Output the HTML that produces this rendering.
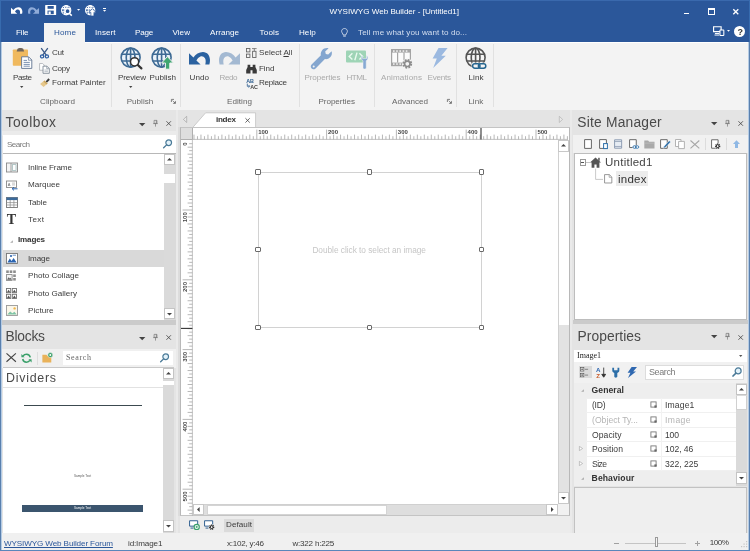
<!DOCTYPE html>
<html><head><meta charset="utf-8"><title>WYSIWYG Web Builder - [Untitled1]</title>
<style>
html,body{margin:0;padding:0;}
body{width:750px;height:551px;overflow:hidden;position:relative;background:#e4e4e4;font-family:"Liberation Sans",sans-serif;font-size:8.1px;color:#3c3c3c;}
#w div,#w svg,#w span{position:absolute;display:block;box-sizing:border-box;}
#w svg{overflow:visible;}
#w{position:absolute;left:0;top:0;width:750px;height:551px;overflow:hidden;will-change:transform;}
.t{white-space:nowrap;line-height:1;}
</style></head><body><div id="w">
<div style="left:0px;top:0px;width:750px;height:41.6px;background:#2b579a;"></div>
<div style="left:0px;top:0px;width:750px;height:1px;background:#3a69ad;"></div>
<div style="left:0px;top:0px;width:1px;height:41.6px;background:#376bae;"></div>
<div style="left:749px;top:0px;width:1px;height:41.6px;background:#376bae;"></div>
<div style="left:0px;top:41.6px;width:750px;height:68.6px;background:#f3f3f3;border-top:1px solid #fff;"></div>
<div style="left:44px;top:23px;width:41px;height:19.6px;background:#f3f3f3;"></div>
<svg style="left:10.8px;top:7.1px;color:#fff;" width="11.4" height="7" viewBox="0 0 21 12.4"><path d="M0 1.2L4.4 5.4C6.5 2.2 10 0 14 0C18.2 0 21 3.6 21 8C21 9.5 20.8 11 20.4 12.4H16.3C16.9 10 16.9 7.8 16 6.2C15 4.4 13 3.8 11.4 4.4C9.8 5 8.4 6.6 7.4 8.4L11.6 12.4H0Z" fill="currentColor"/></svg>
<svg style="left:28.2px;top:7.1px;color:#8fabd8;" width="11" height="7" viewBox="0 0 21 12.4"><g transform="translate(21,0) scale(-1,1)"><path d="M0 1.2L4.4 5.4C6.5 2.2 10 0 14 0C18.2 0 21 3.6 21 8C21 9.5 20.8 11 20.4 12.4H16.3C16.9 10 16.9 7.8 16 6.2C15 4.4 13 3.8 11.4 4.4C9.8 5 8.4 6.6 7.4 8.4L11.6 12.4H0Z" fill="currentColor"/></g></svg>
<svg style="left:45px;top:5.1px;" width="11.3" height="10" viewBox="0 0 11 10"><rect x="0" y="0" width="11" height="10" rx="0.6" fill="#fff"/><rect x="2.4" y="1" width="6.2" height="2.8" fill="#2b579a"/><rect x="2.4" y="5.6" width="6.2" height="3.6" fill="#2b579a"/><rect x="3.4" y="6.5" width="2.2" height="2.7" fill="#fff"/></svg>
<svg style="left:61.2px;top:4.5px;" width="11.4" height="11" viewBox="0 0 11.4 11"><g fill="none" stroke="#fff" stroke-width="1.15"><circle cx="5.2" cy="5.2" r="4.6"/><ellipse cx="5.2" cy="5.2" rx="2" ry="4.6"/><path d="M0.6 3.6H9.8M0.6 6.8H9.8M5.2 0.6V9.8"/></g><circle cx="6.6" cy="6.2" r="2.4" fill="#2b579a" stroke="#fff" stroke-width="1.1"/><path d="M8.2 8.2L10.8 10.6" stroke="#fff" stroke-width="1.5"/></svg>
<svg style="left:76.7px;top:9.0px;" width="3.2" height="1.8" viewBox="0 0 3.2 1.8"><path d="M0 0H3.2L1.6 1.8Z" fill="#fff"/></svg>
<svg style="left:85.4px;top:4.5px;" width="11.4" height="11" viewBox="0 0 11.4 11"><g fill="none" stroke="#fff" stroke-width="1.15"><circle cx="5.2" cy="5.2" r="4.6"/><ellipse cx="5.2" cy="5.2" rx="2" ry="4.6"/><path d="M0.6 3.6H9.8M0.6 6.8H9.8M5.2 0.6V9.8"/></g><path d="M7.4 3.6L11 7.4H8.9V11H5.9V7.4H3.8Z" fill="#fff" stroke="#2b579a" stroke-width="0.7"/></svg>
<div style="left:103.2px;top:8.4px;width:3.2px;height:0.8px;background:#fff;"></div>
<svg style="left:103.2px;top:9.85px;" width="3.2" height="1.7" viewBox="0 0 3.2 1.7"><path d="M0 0H3.2L1.6 1.7Z" fill="#fff"/></svg>
<span class="t" style="left:329.6px;top:7.64px;color:#fff;letter-spacing:-0.014px;">WYSIWYG Web Builder - [Untitled1]</span>
<div style="left:684px;top:12.6px;width:5px;height:1.4px;background:#fff;"></div>
<div style="left:708px;top:8px;width:7.2px;height:7.2px;background:transparent;border:1px solid #fff;border-top-width:2px;"></div>
<svg style="left:733px;top:9px;" width="5.6" height="5.6" viewBox="0 0 5.6 5.6"><path d="M0.3 0.3L5.3 5.3M5.3 0.3L0.3 5.3" stroke="#fff" stroke-width="1.3"/></svg>
<svg style="left:713px;top:26px;" width="11.6" height="10" viewBox="0 0 12 10"><path d="M0.6 0.6H8.4V5.6H0.6Z" fill="none" stroke="#fff" stroke-width="1.2"/><path d="M2 7.6H6.4M1.6 9.2H6.4" stroke="#fff" stroke-width="1"/><rect x="7.2" y="4" width="4" height="5.6" rx="0.5" fill="#2b579a" stroke="#fff" stroke-width="1.1"/></svg>
<svg style="left:726.8px;top:29.75px;" width="3" height="1.7" viewBox="0 0 3 1.7"><path d="M0 0H3L1.5 1.7Z" fill="#fff"/></svg>
<div style="left:734px;top:26px;width:11.2px;height:11.2px;background:#fff;border-radius:50%;"></div>
<span class="t" style="left:737.4px;top:27.64px;font-size:9px;color:#333;font-weight:700;letter-spacing:-0.800px;">?</span>
<span class="t" style="left:16px;top:28.84px;color:#fff;letter-spacing:-0.149px;">File</span>
<span class="t" style="left:54px;top:28.84px;color:#2b579a;letter-spacing:0.135px;">Home</span>
<span class="t" style="left:95px;top:28.84px;color:#fff;letter-spacing:0.070px;">Insert</span>
<span class="t" style="left:135px;top:28.84px;color:#fff;letter-spacing:-0.202px;">Page</span>
<span class="t" style="left:172.5px;top:28.84px;color:#fff;letter-spacing:0.031px;">View</span>
<span class="t" style="left:210px;top:28.84px;color:#fff;letter-spacing:0.034px;">Arrange</span>
<span class="t" style="left:259.6px;top:28.84px;color:#fff;letter-spacing:0.123px;">Tools</span>
<span class="t" style="left:299px;top:28.84px;color:#fff;letter-spacing:0.015px;">Help</span>
<svg style="left:341px;top:27.6px;" width="7" height="9" viewBox="0 0 7 9"><path d="M3.5 0.5C1.8 0.5 0.6 1.8 0.6 3.3C0.6 4.5 1.5 5.2 2 6.2V7H5V6.2C5.5 5.2 6.4 4.5 6.4 3.3C6.4 1.8 5.2 0.5 3.5 0.5ZM2.2 8.2H4.8" fill="none" stroke="#dfe7f3" stroke-width="0.8"/></svg>
<span class="t" style="left:358px;top:28.84px;color:#d5dff0;letter-spacing:0.082px;">Tell me what you want to do...</span>
<div style="left:111.0px;top:44px;width:0.9px;height:63px;background:#e1e1e1;"></div>
<div style="left:180.0px;top:44px;width:0.9px;height:63px;background:#e1e1e1;"></div>
<div style="left:299.20000000000005px;top:44px;width:0.9px;height:63px;background:#e1e1e1;"></div>
<div style="left:374.0px;top:44px;width:0.9px;height:63px;background:#e1e1e1;"></div>
<div style="left:456.0px;top:44px;width:0.9px;height:63px;background:#e1e1e1;"></div>
<div style="left:493.20000000000005px;top:44px;width:0.9px;height:63px;background:#e1e1e1;"></div>
<svg style="left:12px;top:48px;" width="20" height="21" viewBox="0 0 20 21"><rect x="0.8" y="1.4" width="15.2" height="16.4" rx="0.8" fill="#f0b95e"/><path d="M4.6 3.4L5.6 0.8C6.4-0.2 10.4-0.2 11.2 0.8L12.2 3.4Z" fill="#70655a"/><path d="M9.6 8.8H16.6L19.8 12V20.4H9.6Z" fill="#fff" stroke="#5f7390" stroke-width="0.9"/><path d="M16.4 9V12.2H19.6" fill="none" stroke="#5f7390" stroke-width="0.7"/><path d="M11.6 12.4H15M11.6 14.4H17.8M11.6 16.4H17.8M11.6 18.2H17.8" stroke="#6d86a8" stroke-width="0.9"/></svg>
<span class="t" style="left:13px;top:74.24px;letter-spacing:-0.426px;">Paste</span>
<svg style="left:20.3px;top:86.05px;" width="3.4" height="1.9" viewBox="0 0 3.4 1.9"><path d="M0 0H3.4L1.7 1.9Z" fill="#444"/></svg>
<svg style="left:40.1px;top:47.5px;" width="9" height="10.6" viewBox="0 0 9 10.6"><path d="M1.2 0.2L6.4 7.4M7.8 0.2L2.6 7.4" stroke="#3c5a88" stroke-width="1.3" fill="none"/><ellipse cx="2.1" cy="8.4" rx="1.6" ry="1.5" fill="none" stroke="#2e5fa3" stroke-width="1.3"/><ellipse cx="6.9" cy="8.4" rx="1.6" ry="1.5" fill="none" stroke="#2e5fa3" stroke-width="1.3"/></svg>
<span class="t" style="left:52px;top:49.44px;letter-spacing:-0.305px;">Cut</span>
<svg style="left:39.4px;top:62.6px;" width="11" height="10.8" viewBox="0 0 11 11"><path d="M0.5 0.5H3.6L5.4 2.3V7.4H0.5Z" fill="#fff" stroke="#a9adb4" stroke-width="0.8"/><path d="M4 3.2H8L10.4 5.6V10.5H4Z" fill="#fff" stroke="#7d8894" stroke-width="0.9"/><path d="M7.8 3.4V5.8H10.2" fill="none" stroke="#7d8894" stroke-width="0.7"/><path d="M5.4 7.2H9M5.4 8.8H9" stroke="#9aa4b0" stroke-width="0.7"/></svg>
<span class="t" style="left:52px;top:64.84px;letter-spacing:-0.302px;">Copy</span>
<svg style="left:40.2px;top:78.4px;" width="10" height="9.2" viewBox="0 0 10 9.2"><path d="M5.6 3.4L8.4 0.3L9.9 1.7L6.9 4.7Z" fill="#3d3d3d"/><path d="M4.4 2.6L7.6 5.6L3.6 9L0.1 6Z" fill="#e6c88c"/><path d="M4.4 2.6L7.6 5.6L6.6 6.4L3.5 3.4Z" fill="#c9a560"/></svg>
<span class="t" style="left:52px;top:79.44px;letter-spacing:0.005px;">Format Painter</span>
<span class="t" style="left:40px;top:98.34px;color:#666;letter-spacing:0.043px;">Clipboard</span>
<svg style="left:120px;top:47px;" width="22" height="22" viewBox="0 0 22 22"><g fill="none" stroke="#3d6a94" stroke-width="1.6"><circle cx="10.6" cy="10.6" r="9.5" fill="#eaf2f9"/><ellipse cx="10.6" cy="10.6" rx="4.37" ry="9.5"/><path d="M10.6 1.0999999999999996V20.1M1.76 7.18H19.44M1.76 14.02H19.44"/></g><circle cx="14.6" cy="14.8" r="4.1" fill="#fff" stroke="#333" stroke-width="1.5"/><path d="M17.8 18L21.4 21.4" stroke="#333" stroke-width="2.2" stroke-linecap="round"/></svg>
<span class="t" style="left:118px;top:74.24px;letter-spacing:-0.133px;">Preview</span>
<svg style="left:129.3px;top:86.05px;" width="3.4" height="1.9" viewBox="0 0 3.4 1.9"><path d="M0 0H3.4L1.7 1.9Z" fill="#444"/></svg>
<svg style="left:151px;top:47px;" width="22" height="22" viewBox="0 0 22 22"><g fill="none" stroke="#3d6a94" stroke-width="1.6"><circle cx="10.6" cy="10.6" r="9.5" fill="#eaf2f9"/><ellipse cx="10.6" cy="10.6" rx="4.37" ry="9.5"/><path d="M10.6 1.0999999999999996V20.1M1.76 7.18H19.44M1.76 14.02H19.44"/></g><path d="M16.4 9.6L22.4 16H18.8V22.2H14.4V16H10.6Z" fill="#3fa671" stroke="#f3f3f3" stroke-width="1"/></svg>
<span class="t" style="left:149.6px;top:74.24px;letter-spacing:-0.024px;">Publish</span>
<span class="t" style="left:126.7px;top:98.34px;color:#666;letter-spacing:0.009px;">Publish</span>
<svg style="left:171px;top:98.6px;" width="5" height="5" viewBox="0 0 5 5"><path d="M0.4 3V0.4H3" fill="none" stroke="#666" stroke-width="0.8"/><path d="M4.8 1.8V4.8H1.8Z" fill="#666"/><path d="M1.6 1.6L3.6 3.6" stroke="#666" stroke-width="0.7"/></svg>
<svg style="left:189px;top:51.8px;color:#2b62a0;" width="21" height="12.4" viewBox="0 0 21 12.4"><path d="M0 1.2L4.4 5.4C6.5 2.2 10 0 14 0C18.2 0 21 3.6 21 8C21 9.5 20.8 11 20.4 12.4H16.3C16.9 10 16.9 7.8 16 6.2C15 4.4 13 3.8 11.4 4.4C9.8 5 8.4 6.6 7.4 8.4L11.6 12.4H0Z" fill="currentColor"/></svg>
<span class="t" style="left:189.6px;top:74.24px;letter-spacing:0.014px;">Undo</span>
<svg style="left:218.6px;top:51.8px;color:#a3b9d2;" width="21" height="12.4" viewBox="0 0 21 12.4"><g transform="translate(21,0) scale(-1,1)"><path d="M0 1.2L4.4 5.4C6.5 2.2 10 0 14 0C18.2 0 21 3.6 21 8C21 9.5 20.8 11 20.4 12.4H16.3C16.9 10 16.9 7.8 16 6.2C15 4.4 13 3.8 11.4 4.4C9.8 5 8.4 6.6 7.4 8.4L11.6 12.4H0Z" fill="currentColor"/></g></svg>
<span class="t" style="left:219.6px;top:74.24px;color:#aaa;letter-spacing:-0.453px;">Redo</span>
<svg style="left:246px;top:48px;" width="11" height="10" viewBox="0 0 11 10"><g fill="none" stroke="#666" stroke-width="0.9"><rect x="0.5" y="0.5" width="3.4" height="3.4"/><rect x="0.5" y="6.1" width="3.4" height="3.4"/><rect x="6.6" y="3.3" width="3.4" height="6.2"/></g><path d="M6 0.6H10.6M8.3 0.6V3" stroke="#666" stroke-width="0.8"/></svg>
<span class="t" style="left:259px;top:49.44px;letter-spacing:0.010px;">Select <u>A</u>ll</span>
<svg style="left:246px;top:63.5px;" width="11" height="10" viewBox="0 0 11 10"><path d="M1.6 0.8H4.3V3H6.7V0.8H9.4V3L10.8 6V9.6H6.5V6.2H4.5V9.6H0.2V6L1.6 3Z" fill="#3a3a3a"/></svg>
<span class="t" style="left:259px;top:64.84px;letter-spacing:-0.117px;">Find</span>
<svg style="left:246px;top:77.5px;" width="12" height="11" viewBox="0 0 12 11"><text x="0.2" y="4.6" font-size="5.4" font-weight="700" font-family="Liberation Sans,sans-serif" fill="#2c5d8f">AB</text><text x="4.2" y="10.6" font-size="5.4" font-weight="700" font-family="Liberation Sans,sans-serif" fill="#444">AC</text><path d="M1.3 5.6V8.3H3.4M2.6 7L3.8 8.3L2.6 9.6" fill="none" stroke="#2c5d8f" stroke-width="0.8"/></svg>
<span class="t" style="left:259px;top:79.44px;letter-spacing:-0.284px;">Replace</span>
<span class="t" style="left:227px;top:98.34px;color:#666;letter-spacing:0.042px;">Editing</span>
<svg style="left:311px;top:48px;" width="22" height="21" viewBox="0 0 22 21"><path d="M20.6 3.2L17.2 6.6L14.8 6L14.2 3.6L17.6 0.3C15.2-0.3 12.4 0.5 11 2.4C9.8 4 9.5 5.8 9.9 7.3L0.6 16.6C-0.6 17.8-0.4 19.6 0.6 20.6C1.6 21.6 3.4 21.6 4.6 20.4L13.9 11.1C15.6 11.5 17.7 10.9 19.2 9.3C20.8 7.7 21.3 5.2 20.6 3.2Z" fill="#84a6cf"/><circle cx="2.7" cy="18.5" r="1" fill="#f3f3f3"/></svg>
<span class="t" style="left:304.4px;top:74.24px;color:#aaa;letter-spacing:-0.077px;">Properties</span>
<svg style="left:346px;top:50px;" width="22" height="19" viewBox="0 0 22 19"><rect x="0" y="0.4" width="20" height="12.2" rx="1" fill="#9ed4b6"/><path d="M6.4 3.2L3.2 6.4L6.4 9.6M13.4 3.2L16.6 6.4L13.4 9.6M11 2.6L8.8 10.2" fill="none" stroke="#eafaf0" stroke-width="1.4"/><path d="M16.6 5.6C14.8 6.6 14.8 9.6 17 10.8V18C17 19.4 20.2 19.4 20.2 18V10.8C22.4 9.6 22.4 6.6 20.6 5.6V8.6H16.6Z" fill="#86a9d3" stroke="#f3f3f3" stroke-width="0.5"/></svg>
<span class="t" style="left:346.4px;top:74.24px;color:#aaa;letter-spacing:-0.482px;">HTML</span>
<span class="t" style="left:318.4px;top:98.34px;color:#666;letter-spacing:-0.032px;">Properties</span>
<svg style="left:391px;top:49px;" width="22" height="20" viewBox="0 0 22 20"><rect x="0.6" y="0.6" width="18.8" height="16" fill="#fbfbfb" stroke="#a4a4a4" stroke-width="1.2"/><rect x="0.6" y="0.6" width="18.8" height="3" fill="#a4a4a4"/><rect x="0.6" y="13.6" width="18.8" height="3" fill="#a4a4a4"/><path d="M6.6 3.4V13.6M13 3.4V13.6" stroke="#a4a4a4" stroke-width="1.2"/><g fill="#fff"><rect x="2" y="1.4" width="1.6" height="1.3"/><rect x="5.2" y="1.4" width="1.6" height="1.3"/><rect x="8.4" y="1.4" width="1.6" height="1.3"/><rect x="11.6" y="1.4" width="1.6" height="1.3"/><rect x="14.8" y="1.4" width="1.6" height="1.3"/><rect x="2" y="14.4" width="1.6" height="1.3"/><rect x="5.2" y="14.4" width="1.6" height="1.3"/><rect x="8.4" y="14.4" width="1.6" height="1.3"/></g><circle cx="16.3" cy="14.8" r="5.4" fill="#f3f3f3"/><circle cx="16.3" cy="14.8" r="3.7" fill="none" stroke="#8c8c8c" stroke-width="2.4" stroke-dasharray="1.7 1.2"/><circle cx="16.3" cy="14.8" r="2.7" fill="none" stroke="#8c8c8c" stroke-width="1.6"/></svg>
<span class="t" style="left:381px;top:74.24px;color:#aaa;letter-spacing:0.106px;">Animations</span>
<svg style="left:431px;top:48px;" width="17" height="20" viewBox="0 0 17 20"><path d="M7.5 0H16.6L10.4 7.8H14.8L2.2 20L5.8 10.6H1.6Z" fill="#9bb9e0"/></svg>
<span class="t" style="left:427.6px;top:74.24px;color:#aaa;letter-spacing:-0.270px;">Events</span>
<span class="t" style="left:392px;top:98.34px;color:#666;letter-spacing:0.000px;">Advanced</span>
<svg style="left:447px;top:98.6px;" width="5" height="5" viewBox="0 0 5 5"><path d="M0.4 3V0.4H3" fill="none" stroke="#666" stroke-width="0.8"/><path d="M4.8 1.8V4.8H1.8Z" fill="#666"/><path d="M1.6 1.6L3.6 3.6" stroke="#666" stroke-width="0.7"/></svg>
<svg style="left:465px;top:47px;" width="22" height="22" viewBox="0 0 22 22"><g fill="none" stroke="#555" stroke-width="1.6"><circle cx="10.6" cy="10.6" r="9.5" fill="#f6f6f6"/><ellipse cx="10.6" cy="10.6" rx="4.37" ry="9.5"/><path d="M10.6 1.0999999999999996V20.1M1.76 7.18H19.44M1.76 14.02H19.44"/></g><rect x="6.6" y="15.6" width="16" height="7" fill="#f3f3f3"/><g fill="none" stroke="#25658f" stroke-width="1.5"><rect x="7.6" y="16.8" width="7.4" height="4.4" rx="2.2"/><rect x="13.4" y="16.8" width="7.4" height="4.4" rx="2.2"/></g></svg>
<span class="t" style="left:468.4px;top:74.24px;letter-spacing:0.114px;">Link</span>
<span class="t" style="left:468.4px;top:98.34px;color:#666;letter-spacing:-0.020px;">Link</span>
<span class="t" style="left:5.6px;top:116.33px;font-size:13.8px;color:#4a4a4a;letter-spacing:0.473px;">Toolbox</span>
<svg style="left:139.10000000000002px;top:122.5px;" width="6.4" height="3.2" viewBox="0 0 6.4 3.2"><path d="M0 0H6.4L3.2 3.2Z" fill="#444"/></svg>
<svg style="left:153px;top:119.8px;" width="5" height="6.6" viewBox="0 0 5 7"><path d="M1 0.4H4V3.6H1ZM0 3.8H5M2.5 3.8V7M3.4 0.4V3.6" fill="none" stroke="#777" stroke-width="0.75"/></svg>
<svg style="left:166px;top:121.2px;" width="5.4" height="5" viewBox="0 0 6 6"><path d="M0.3 0.3L5.7 5.7M5.7 0.3L0.3 5.7" stroke="#444" stroke-width="1"/></svg>
<div style="left:2px;top:130.6px;width:175px;height:5px;background:#ebebeb;"></div>
<div style="left:3px;top:135.4px;width:173px;height:18.2px;background:#fff;border-bottom:1px solid #b8b8b8;"></div>
<span class="t" style="left:7px;top:141.04px;color:#7a7a7a;letter-spacing:-0.531px;">Search</span>
<svg style="left:163px;top:139.2px;" width="9.2" height="9.2" viewBox="0 0 10 10"><circle cx="6.2" cy="4.1" r="3.1" fill="#e3f2fa" stroke="#4a7a98" stroke-width="1.3"/><path d="M3.9 6.4L0.7 9.5" stroke="#4a7a98" stroke-width="1.5" stroke-linecap="round"/></svg>
<div style="left:3px;top:153.6px;width:173px;height:166px;background:#fff;"></div>
<div style="left:163.6px;top:153.6px;width:12.2px;height:166px;background:#dadada;"></div>
<div style="left:164px;top:154.4px;width:11px;height:10.6px;background:#fff;border:1px solid #c4c4c4;"></div>
<svg style="left:167.0px;top:158.29999999999998px;" width="5" height="2.6" viewBox="0 0 5 2.6"><path d="M0 2.6H5L2.5 0Z" fill="#444"/></svg>
<div style="left:164px;top:174px;width:11px;height:8.8px;background:#fff;"></div>
<div style="left:164px;top:308.4px;width:11px;height:11px;background:#fff;border:1px solid #c4c4c4;"></div>
<svg style="left:167.0px;top:312.7px;" width="5" height="2.6" viewBox="0 0 5 2.6"><path d="M0 0H5L2.5 2.6Z" fill="#444"/></svg>
<svg style="left:6px;top:161.9px;" width="12" height="11" viewBox="0 0 12 10"><rect x="0.5" y="0.5" width="11" height="9" fill="#f4f4f4" stroke="#8a8a8a" stroke-width="0.9"/><path d="M5 0.5V9.5" stroke="#8a8a8a" stroke-width="0.8"/><rect x="6.6" y="2.2" width="3.4" height="5.6" fill="#fff" stroke="#8aa" stroke-width="0.6"/></svg>
<span class="t" style="left:28px;top:163.84px;letter-spacing:-0.089px;">Inline Frame</span>
<svg style="left:6px;top:179.5px;" width="12" height="11" viewBox="0 0 12 10"><rect x="0.5" y="0.5" width="10" height="6.5" fill="#fff" stroke="#8a8a8a" stroke-width="0.9"/><text x="1.8" y="5.2" font-size="4" font-family="Liberation Sans,sans-serif" fill="#666">A</text><path d="M6 2.6H9M6 4.4H9" stroke="#999" stroke-width="0.6"/><path d="M11.5 8.3H6.3M8 6.7L6.2 8.3L8 9.9" fill="none" stroke="#2b64b0" stroke-width="1"/></svg>
<span class="t" style="left:28px;top:181.44px;letter-spacing:0.008px;">Marquee</span>
<svg style="left:6px;top:196.9px;" width="12" height="11" viewBox="0 0 12 11"><rect x="0.5" y="0.5" width="11" height="10" fill="#fff" stroke="#777" stroke-width="0.9"/><rect x="0.5" y="0.5" width="11" height="2.6" fill="#3c6a9a"/><path d="M0.5 5.6H11.5M0.5 8H11.5M4.2 3V10.5M7.9 3V10.5" stroke="#888" stroke-width="0.7"/></svg>
<span class="t" style="left:28px;top:198.84px;letter-spacing:-0.090px;">Table</span>
<span class="t" style="left:28px;top:216.04px;letter-spacing:0.385px;">Text</span>
<span class="t" style="left:6.8px;top:212.84px;font-size:14px;color:#333;font-weight:700;font-family:'Liberation Serif',serif;letter-spacing:-0.144px;">T</span>
<svg style="left:9.8px;top:239.6px;" width="3" height="3" viewBox="0 0 4 4"><path d="M3.8 0.2V3.8H0.2Z" fill="#aaa"/></svg>
<span class="t" style="left:18px;top:236.44px;color:#333;font-weight:700;letter-spacing:-0.181px;">Images</span>
<div style="left:3px;top:250px;width:160.6px;height:17.2px;background:#d9d9d9;"></div>
<svg style="left:6.2px;top:253.10000000000002px;" width="12" height="11" viewBox="0 0 12 11"><rect x="0.5" y="0.5" width="11" height="10" fill="#fff" stroke="#777" stroke-width="0.9"/><path d="M1.4 9.6L3.8 5.6L5.6 8L7.6 5L10.6 9.6Z" fill="#2b64b0"/><circle cx="5" cy="3" r="1.1" fill="#2b64b0"/><path d="M6.6 2.2H10" stroke="#2b64b0" stroke-width="0.7"/></svg>
<span class="t" style="left:28px;top:255.04px;letter-spacing:-0.125px;">Image</span>
<svg style="left:6.2px;top:270.3px;" width="10" height="11" viewBox="0 0 10 11"><g fill="#8d8d8d"><rect x="0.2" y="0.4" width="2.6" height="2.6"/><rect x="3.7" y="0.4" width="2.6" height="2.6"/><rect x="7.2" y="0.4" width="2.6" height="2.6"/><rect x="7.2" y="4.4" width="2.6" height="2.6"/><rect x="7.2" y="8" width="2.6" height="2.6"/></g><rect x="0.5" y="4.6" width="5.6" height="5.8" fill="#f2f2f2" stroke="#808080" stroke-width="0.8"/><path d="M1 9.8L2.6 7.2L3.8 8.6L4.6 7.8L5.8 9.8Z" fill="#666"/></svg>
<span class="t" style="left:28px;top:272.24px;letter-spacing:0.012px;">Photo Collage</span>
<svg style="left:6.2px;top:287.7px;" width="11" height="11" viewBox="0 0 11 11"><g fill="#fff" stroke="#707070" stroke-width="0.9"><rect x="0.5" y="0.5" width="4.2" height="4.2"/><rect x="6.3" y="0.5" width="4.2" height="4.2"/><rect x="0.5" y="6.3" width="4.2" height="4.2"/><rect x="6.3" y="6.3" width="4.2" height="4.2"/></g><path d="M1 4.2L2.6 1.8L4.2 4.2ZM6.8 4.2L8.4 1.8L10 4.2ZM1 10L2.6 7.6L4.2 10ZM6.8 10L8.4 7.6L10 10Z" fill="#555"/></svg>
<span class="t" style="left:28px;top:289.64px;letter-spacing:-0.004px;">Photo Gallery</span>
<svg style="left:6.2px;top:305.1px;" width="12" height="11" viewBox="0 0 12 11"><rect x="0.5" y="0.5" width="11" height="10" fill="#fbf7ea" stroke="#999" stroke-width="0.9"/><path d="M1.2 9.6L4.2 6.4L6.4 8.2L8.4 6.8L10.8 9.6Z" fill="#7fc4a6"/><circle cx="8.6" cy="3.4" r="1.2" fill="#f0b64a"/></svg>
<span class="t" style="left:28px;top:307.04px;letter-spacing:0.066px;">Picture</span>
<div style="left:0px;top:319.6px;width:177px;height:5px;background:#cbcbcb;"></div>
<span class="t" style="left:5.6px;top:329.93px;font-size:13.8px;color:#4a4a4a;letter-spacing:-0.248px;">Blocks</span>
<svg style="left:139.10000000000002px;top:336.59999999999997px;" width="6.4" height="3.2" viewBox="0 0 6.4 3.2"><path d="M0 0H6.4L3.2 3.2Z" fill="#444"/></svg>
<svg style="left:153px;top:333.8px;" width="5" height="6.6" viewBox="0 0 5 7"><path d="M1 0.4H4V3.6H1ZM0 3.8H5M2.5 3.8V7M3.4 0.4V3.6" fill="none" stroke="#777" stroke-width="0.75"/></svg>
<svg style="left:166px;top:335.2px;" width="5.4" height="5" viewBox="0 0 6 6"><path d="M0.3 0.3L5.7 5.7M5.7 0.3L0.3 5.7" stroke="#444" stroke-width="1"/></svg>
<div style="left:2px;top:349px;width:175px;height:19px;background:#f0f0f0;"></div>
<svg style="left:5.6px;top:353.4px;" width="10.4" height="9.2" viewBox="0 0 10 9"><path d="M0.4 0.4L9.6 8.6M9.6 0.4L0.4 8.6" stroke="#444" stroke-width="1.1"/></svg>
<svg style="left:21px;top:352.6px;" width="11" height="10.4" viewBox="0 0 11 10"><path d="M9.3 4.2C8.9 2.2 7.4 1 5.5 1C4 1 2.8 1.7 2.1 2.8M1.7 5.8C2.1 7.8 3.6 9 5.5 9C7 9 8.2 8.3 8.9 7.2" fill="none" stroke="#3aa06a" stroke-width="1.5"/><path d="M0.4 0.8V4H3.6ZM10.6 9.2V6H7.4Z" fill="#3aa06a"/></svg>
<div style="left:37px;top:351.5px;width:0.8px;height:13px;background:#dedede;"></div>
<svg style="left:41.6px;top:352px;" width="11.6" height="11" viewBox="0 0 12 11"><path d="M0.4 2.6H4.6L5.8 4H9.6V10.6H0.4Z" fill="#e9b25a"/><circle cx="8.6" cy="3" r="2.6" fill="#3aa06a" stroke="#f0f0f0" stroke-width="0.6"/><circle cx="8.6" cy="3" r="1" fill="#fff"/></svg>
<div style="left:63px;top:350.6px;width:110px;height:14.6px;background:#fff;"></div>
<span class="t" style="left:66px;top:354.48px;font-size:8px;color:#666;font-family:'Liberation Serif',serif;letter-spacing:0.647px;">Search</span>
<svg style="left:160.4px;top:352.6px;" width="9.2" height="9.2" viewBox="0 0 10 10"><circle cx="6.2" cy="4.1" r="3.1" fill="#e3f2fa" stroke="#4a7a98" stroke-width="1.3"/><path d="M3.9 6.4L0.7 9.5" stroke="#4a7a98" stroke-width="1.5" stroke-linecap="round"/></svg>
<div style="left:3px;top:367.2px;width:171px;height:165.6px;background:#fff;border-top:1px solid #c8c8c8;"></div>
<div style="left:162.8px;top:368px;width:10.8px;height:164.8px;background:#dadada;"></div>
<div style="left:162.8px;top:368.2px;width:10.8px;height:10.8px;background:#fff;border:1px solid #c4c4c4;"></div>
<svg style="left:165.7px;top:372.3px;" width="5" height="2.6" viewBox="0 0 5 2.6"><path d="M0 2.6H5L2.5 0Z" fill="#444"/></svg>
<div style="left:162.8px;top:379.6px;width:10.8px;height:5.6px;background:#fff;border-top:1px solid #d8d8d8;"></div>
<div style="left:162.8px;top:520.4px;width:10.8px;height:11.2px;background:#fff;border:1px solid #c4c4c4;"></div>
<svg style="left:165.7px;top:524.7px;" width="5" height="2.6" viewBox="0 0 5 2.6"><path d="M0 0H5L2.5 2.6Z" fill="#444"/></svg>
<span class="t" style="left:6px;top:371.64px;font-size:12.4px;color:#4a4a4a;letter-spacing:0.748px;">Dividers</span>
<div style="left:3px;top:387px;width:160px;height:0.8px;background:#e2e2e2;"></div>
<div style="left:24px;top:405px;width:118px;height:1.3px;background:#3c4a50;"></div>
<span class="t" style="left:74px;top:475.08px;font-size:3px;color:#555;letter-spacing:0.055px;">Sample Text</span>
<div style="left:22px;top:504.6px;width:121px;height:7.8px;background:#3b556e;"></div>
<span class="t" style="left:74px;top:507.18px;font-size:3px;color:#fff;letter-spacing:0.055px;">Sample Text</span>
<div style="left:175.8px;top:110px;width:2px;height:423.4px;background:#eaeaea;"></div>
<div style="left:177.8px;top:127px;width:2.2px;height:389px;background:#dcdcdc;"></div>
<div style="left:570px;top:110px;width:2.4px;height:423.4px;background:#eaeaea;"></div>
<div style="left:180px;top:516px;width:390px;height:17.4px;background:#ececec;"></div>
<svg style="left:180px;top:110px;" width="400" height="18" viewBox="0 0 400 18"><path d="M13 17.2L25.6 2.8H75.6V17.2" fill="#fff" stroke="#c2c2c2" stroke-width="0.8"/></svg>
<svg style="left:183.2px;top:116.1px;" width="3.6" height="6.4" viewBox="0 0 3.6 6.4"><path d="M3.6 0V6.4L0 3.2Z" fill="#e4e4e4"/></svg>
<svg style="left:183px;top:116px;" width="4" height="6.8" viewBox="0 0 4 6.8"><path d="M3.7 0.3V6.5L0.4 3.4Z" fill="#e9e9e9" stroke="#999" stroke-width="0.6"/></svg>
<svg style="left:559px;top:116px;" width="4" height="6.8" viewBox="0 0 4 6.8"><path d="M0.3 0.3V6.5L3.6 3.4Z" fill="#e9e9e9" stroke="#aaa" stroke-width="0.6"/></svg>
<span class="t" style="left:216px;top:115.84px;color:#333;font-weight:700;letter-spacing:-0.285px;">index</span>
<svg style="left:245px;top:118px;" width="5.2" height="4.8" viewBox="0 0 6 6"><path d="M0.3 0.3L5.7 5.7M5.7 0.3L0.3 5.7" stroke="#444" stroke-width="1"/></svg>
<div style="left:180px;top:127px;width:389.6px;height:389px;background:#fff;border:1px solid #b8b8b8;border-top-color:#c4c4c4;border-bottom-color:#c4c4c4;"></div>
<div style="left:181px;top:128px;width:11.6px;height:11.6px;background:#dedede;border-right:1px solid #b0b0b0;border-bottom:1px solid #b0b0b0;"></div>
<svg style="left:192.4px;top:128px;" width="376" height="12" viewBox="0 0 376 12"><path d="M1.98 11.6v-5M5.47 11.6v-3.4M8.96 11.6v-5M12.45 11.6v-3.4M15.94 11.6v-5M19.43 11.6v-3.4M22.92 11.6v-5M26.41 11.6v-3.4M29.90 11.6v-5M33.39 11.6v-3.4M36.88 11.6v-5M40.37 11.6v-3.4M43.86 11.6v-5M47.35 11.6v-3.4M50.84 11.6v-5M54.33 11.6v-3.4M57.82 11.6v-5M61.31 11.6v-3.4M64.80 11.6v-10M68.29 11.6v-3.4M71.78 11.6v-5M75.27 11.6v-3.4M78.76 11.6v-5M82.25 11.6v-3.4M85.74 11.6v-5M89.23 11.6v-3.4M92.72 11.6v-5M96.21 11.6v-3.4M99.70 11.6v-5M103.19 11.6v-3.4M106.68 11.6v-5M110.17 11.6v-3.4M113.66 11.6v-5M117.15 11.6v-3.4M120.64 11.6v-5M124.13 11.6v-3.4M127.62 11.6v-5M131.11 11.6v-3.4M134.60 11.6v-10M138.09 11.6v-3.4M141.58 11.6v-5M145.07 11.6v-3.4M148.56 11.6v-5M152.05 11.6v-3.4M155.54 11.6v-5M159.03 11.6v-3.4M162.52 11.6v-5M166.01 11.6v-3.4M169.50 11.6v-5M172.99 11.6v-3.4M176.48 11.6v-5M179.97 11.6v-3.4M183.46 11.6v-5M186.95 11.6v-3.4M190.44 11.6v-5M193.93 11.6v-3.4M197.42 11.6v-5M200.91 11.6v-3.4M204.40 11.6v-10M207.89 11.6v-3.4M211.38 11.6v-5M214.87 11.6v-3.4M218.36 11.6v-5M221.85 11.6v-3.4M225.34 11.6v-5M228.83 11.6v-3.4M232.32 11.6v-5M235.81 11.6v-3.4M239.30 11.6v-5M242.79 11.6v-3.4M246.28 11.6v-5M249.77 11.6v-3.4M253.26 11.6v-5M256.75 11.6v-3.4M260.24 11.6v-5M263.73 11.6v-3.4M267.22 11.6v-5M270.71 11.6v-3.4M274.20 11.6v-10M277.69 11.6v-3.4M281.18 11.6v-5M284.67 11.6v-3.4M288.16 11.6v-5M291.65 11.6v-3.4M295.14 11.6v-5M298.63 11.6v-3.4M302.12 11.6v-5M305.61 11.6v-3.4M309.10 11.6v-5M312.59 11.6v-3.4M316.08 11.6v-5M319.57 11.6v-3.4M323.06 11.6v-5M326.55 11.6v-3.4M330.04 11.6v-5M333.53 11.6v-3.4M337.02 11.6v-5M340.51 11.6v-3.4M344.00 11.6v-10M347.49 11.6v-3.4M350.98 11.6v-5M354.47 11.6v-3.4M357.96 11.6v-5M361.45 11.6v-3.4M364.94 11.6v-5M368.43 11.6v-3.4M371.92 11.6v-5M375.41 11.6v-3.4" stroke="#a5a5a5" stroke-width="0.8" fill="none"/><path d="M0 11.4H376" stroke="#b5b5b5" stroke-width="0.8"/><text x="66.2" y="6" font-size="6" font-weight="700" fill="#444" font-family="Liberation Sans,sans-serif">100</text><text x="136.0" y="6" font-size="6" font-weight="700" fill="#444" font-family="Liberation Sans,sans-serif">200</text><text x="205.8" y="6" font-size="6" font-weight="700" fill="#444" font-family="Liberation Sans,sans-serif">300</text><text x="275.6" y="6" font-size="6" font-weight="700" fill="#444" font-family="Liberation Sans,sans-serif">400</text><text x="345.4" y="6" font-size="6" font-weight="700" fill="#444" font-family="Liberation Sans,sans-serif">500</text><path d="M289 0V11.4" stroke="#333" stroke-width="1.1"/></svg>
<svg style="left:181px;top:139.6px;" width="12" height="376" viewBox="0 0 12 376"><path d="M11.6 3.69h-3.4M11.6 7.18h-5M11.6 10.67h-3.4M11.6 14.16h-5M11.6 17.65h-3.4M11.6 21.14h-5M11.6 24.63h-3.4M11.6 28.12h-5M11.6 31.61h-3.4M11.6 35.10h-5M11.6 38.59h-3.4M11.6 42.08h-5M11.6 45.57h-3.4M11.6 49.06h-5M11.6 52.55h-3.4M11.6 56.04h-5M11.6 59.53h-3.4M11.6 63.02h-5M11.6 66.51h-3.4M11.6 70.00h-10M11.6 73.49h-3.4M11.6 76.98h-5M11.6 80.47h-3.4M11.6 83.96h-5M11.6 87.45h-3.4M11.6 90.94h-5M11.6 94.43h-3.4M11.6 97.92h-5M11.6 101.41h-3.4M11.6 104.90h-5M11.6 108.39h-3.4M11.6 111.88h-5M11.6 115.37h-3.4M11.6 118.86h-5M11.6 122.35h-3.4M11.6 125.84h-5M11.6 129.33h-3.4M11.6 132.82h-5M11.6 136.31h-3.4M11.6 139.80h-10M11.6 143.29h-3.4M11.6 146.78h-5M11.6 150.27h-3.4M11.6 153.76h-5M11.6 157.25h-3.4M11.6 160.74h-5M11.6 164.23h-3.4M11.6 167.72h-5M11.6 171.21h-3.4M11.6 174.70h-5M11.6 178.19h-3.4M11.6 181.68h-5M11.6 185.17h-3.4M11.6 188.66h-5M11.6 192.15h-3.4M11.6 195.64h-5M11.6 199.13h-3.4M11.6 202.62h-5M11.6 206.11h-3.4M11.6 209.60h-10M11.6 213.09h-3.4M11.6 216.58h-5M11.6 220.07h-3.4M11.6 223.56h-5M11.6 227.05h-3.4M11.6 230.54h-5M11.6 234.03h-3.4M11.6 237.52h-5M11.6 241.01h-3.4M11.6 244.50h-5M11.6 247.99h-3.4M11.6 251.48h-5M11.6 254.97h-3.4M11.6 258.46h-5M11.6 261.95h-3.4M11.6 265.44h-5M11.6 268.93h-3.4M11.6 272.42h-5M11.6 275.91h-3.4M11.6 279.40h-10M11.6 282.89h-3.4M11.6 286.38h-5M11.6 289.87h-3.4M11.6 293.36h-5M11.6 296.85h-3.4M11.6 300.34h-5M11.6 303.83h-3.4M11.6 307.32h-5M11.6 310.81h-3.4M11.6 314.30h-5M11.6 317.79h-3.4M11.6 321.28h-5M11.6 324.77h-3.4M11.6 328.26h-5M11.6 331.75h-3.4M11.6 335.24h-5M11.6 338.73h-3.4M11.6 342.22h-5M11.6 345.71h-3.4M11.6 349.20h-10M11.6 352.69h-3.4M11.6 356.18h-5M11.6 359.67h-3.4M11.6 363.16h-5M11.6 366.65h-3.4M11.6 370.14h-5M11.6 373.63h-3.4" stroke="#a5a5a5" stroke-width="0.8" fill="none"/><path d="M11.4 0V376" stroke="#b5b5b5" stroke-width="0.8"/><text transform="translate(6.3,2.4) rotate(-90)" text-anchor="end" font-size="6" font-weight="700" fill="#444" font-family="Liberation Sans,sans-serif">0</text><text transform="translate(6.3,72.2) rotate(-90)" text-anchor="end" font-size="6" font-weight="700" fill="#444" font-family="Liberation Sans,sans-serif">100</text><text transform="translate(6.3,142.0) rotate(-90)" text-anchor="end" font-size="6" font-weight="700" fill="#444" font-family="Liberation Sans,sans-serif">200</text><text transform="translate(6.3,211.8) rotate(-90)" text-anchor="end" font-size="6" font-weight="700" fill="#444" font-family="Liberation Sans,sans-serif">300</text><text transform="translate(6.3,281.6) rotate(-90)" text-anchor="end" font-size="6" font-weight="700" fill="#444" font-family="Liberation Sans,sans-serif">400</text><text transform="translate(6.3,351.4) rotate(-90)" text-anchor="end" font-size="6" font-weight="700" fill="#444" font-family="Liberation Sans,sans-serif">500</text><path d="M0 188.4H11.4" stroke="#333" stroke-width="1.1"/></svg>
<div style="left:257.6px;top:171.6px;width:224px;height:156.4px;background:transparent;border:1px solid #d2d2d2;"></div>
<span class="t" style="left:312.4px;top:245.95px;font-size:8.3px;color:#c6c6c6;letter-spacing:-0.026px;">Double click to select an image</span>
<div style="left:255.4px;top:169.4px;width:5.2px;height:5.2px;background:#fff;border:1px solid #6a6a6a;border-radius:1px;"></div>
<div style="left:255.4px;top:247.20000000000002px;width:5.2px;height:5.2px;background:#fff;border:1px solid #6a6a6a;border-radius:1px;"></div>
<div style="left:255.4px;top:325.0px;width:5.2px;height:5.2px;background:#fff;border:1px solid #6a6a6a;border-radius:1px;"></div>
<div style="left:367.0px;top:169.4px;width:5.2px;height:5.2px;background:#fff;border:1px solid #6a6a6a;border-radius:1px;"></div>
<div style="left:367.0px;top:325.0px;width:5.2px;height:5.2px;background:#fff;border:1px solid #6a6a6a;border-radius:1px;"></div>
<div style="left:478.59999999999997px;top:169.4px;width:5.2px;height:5.2px;background:#fff;border:1px solid #6a6a6a;border-radius:1px;"></div>
<div style="left:478.59999999999997px;top:247.20000000000002px;width:5.2px;height:5.2px;background:#fff;border:1px solid #6a6a6a;border-radius:1px;"></div>
<div style="left:478.59999999999997px;top:325.0px;width:5.2px;height:5.2px;background:#fff;border:1px solid #6a6a6a;border-radius:1px;"></div>
<div style="left:557.6px;top:139.6px;width:11.2px;height:364.6px;background:#e2e2e2;border-left:1px solid #d0d0d0;"></div>
<div style="left:558px;top:139.6px;width:10.8px;height:12px;background:#fff;border:1px solid #c8c8c8;"></div>
<svg style="left:560.9px;top:144.29999999999998px;" width="5" height="2.6" viewBox="0 0 5 2.6"><path d="M0 2.6H5L2.5 0Z" fill="#444"/></svg>
<div style="left:558px;top:152px;width:10.8px;height:172.6px;background:#fff;border-left:1px solid #d0d0d0;"></div>
<div style="left:558px;top:492px;width:10.8px;height:11.6px;background:#fff;border:1px solid #c8c8c8;"></div>
<svg style="left:560.9px;top:496.7px;" width="5" height="2.6" viewBox="0 0 5 2.6"><path d="M0 0H5L2.5 2.6Z" fill="#444"/></svg>
<div style="left:192.6px;top:504px;width:376px;height:11.2px;background:#dedede;border-top:1px solid #d0d0d0;"></div>
<div style="left:192.6px;top:504px;width:11.6px;height:11.2px;background:#fff;border:1px solid #c8c8c8;"></div>
<svg style="left:197.1px;top:507.3px;" width="2.6" height="5" viewBox="0 0 2.6 5"><path d="M2.6 0V5L0 2.5Z" fill="#444"/></svg>
<div style="left:207px;top:504.6px;width:180px;height:10.6px;background:#fff;border:1px solid #d4d4d4;"></div>
<div style="left:546px;top:504px;width:11.6px;height:11.2px;background:#fff;border:1px solid #c8c8c8;"></div>
<svg style="left:550.5px;top:507.3px;" width="2.6" height="5" viewBox="0 0 2.6 5"><path d="M0 0V5L2.6 2.5Z" fill="#444"/></svg>
<div style="left:557.8px;top:504px;width:11px;height:11.2px;background:#f1f1f1;"></div>
<svg style="left:189px;top:520px;" width="10.6" height="10" viewBox="0 0 11 10"><path d="M0.6 0.6H9V6.2H0.6Z" fill="#fff" stroke="#2c5d8f" stroke-width="1"/><path d="M1.6 8.2H4.6" stroke="#2c5d8f" stroke-width="1"/><circle cx="8" cy="7" r="2.7" fill="#fff" stroke="#3aa06a" stroke-width="1.2"/><path d="M6.8 7H9.2M8 5.8V8.2" stroke="#3aa06a" stroke-width="0.9"/></svg>
<svg style="left:204px;top:520px;" width="10.6" height="10" viewBox="0 0 11 10"><path d="M0.6 0.6H9V6.2H0.6Z" fill="#fff" stroke="#2c5d8f" stroke-width="1"/><path d="M1.6 8.2H4.6" stroke="#2c5d8f" stroke-width="1"/><circle cx="8" cy="7.2" r="3" fill="#ececec"/><circle cx="8" cy="7.2" r="2.1" fill="none" stroke="#2a2a2a" stroke-width="1.3" stroke-dasharray="1 0.65"/><circle cx="8" cy="7.2" r="1.5" fill="none" stroke="#2a2a2a" stroke-width="1"/></svg>
<div style="left:223.6px;top:518.6px;width:30.6px;height:13px;background:#dbdbdb;"></div>
<span class="t" style="left:226px;top:521.24px;letter-spacing:0.057px;">Default</span>
<span class="t" style="left:577.3px;top:116.43px;font-size:13.8px;color:#4a4a4a;letter-spacing:0.213px;">Site Manager</span>
<svg style="left:711.0px;top:122.2px;" width="6.4" height="3.2" viewBox="0 0 6.4 3.2"><path d="M0 0H6.4L3.2 3.2Z" fill="#444"/></svg>
<svg style="left:725px;top:119.8px;" width="5" height="6.6" viewBox="0 0 5 7"><path d="M1 0.4H4V3.6H1ZM0 3.8H5M2.5 3.8V7M3.4 0.4V3.6" fill="none" stroke="#777" stroke-width="0.75"/></svg>
<svg style="left:737.6px;top:121px;" width="5.4" height="5" viewBox="0 0 6 6"><path d="M0.3 0.3L5.7 5.7M5.7 0.3L0.3 5.7" stroke="#444" stroke-width="1"/></svg>
<div style="left:573px;top:135px;width:175px;height:18.4px;background:#f1f1f1;"></div>
<svg style="left:583.6px;top:139px;" width="8" height="10" viewBox="0 0 8 10"><path d="M0.6 0.6H7.4V9.4H0.6Z" fill="#fff" stroke="#666" stroke-width="1" stroke-linejoin="round"/></svg>
<svg style="left:599px;top:139px;" width="9" height="10" viewBox="0 0 9 10"><path d="M0.6 0.6H7.4V9.4H0.6Z" fill="#fff" stroke="#666" stroke-width="1"/><rect x="4.6" y="4.6" width="3.8" height="5" fill="#fff" stroke="#2c6ea8" stroke-width="1"/></svg>
<svg style="left:614px;top:139px;" width="8.6" height="10" viewBox="0 0 9 10"><path d="M0.6 0.6H8V9.4H0.6Z" fill="#e6ecf3" stroke="#8a9ab0" stroke-width="1"/><path d="M0.6 2.4H8M0.6 7.6H8" stroke="#8a9ab0" stroke-width="0.8"/></svg>
<svg style="left:629px;top:139px;" width="10.8" height="10" viewBox="0 0 11 10"><path d="M0.6 0.6H7.4V8.6H0.6Z" fill="#fff" stroke="#666" stroke-width="1"/><rect x="3.6" y="6.4" width="7" height="3.6" fill="#fff"/><g fill="none" stroke="#2c6ea8" stroke-width="0.9"><rect x="4" y="6.8" width="3.4" height="2.6" rx="1.3"/><rect x="6.6" y="6.8" width="3.4" height="2.6" rx="1.3"/></g></svg>
<svg style="left:643.8px;top:140px;" width="10.8" height="8.8" viewBox="0 0 11 9"><path d="M0.3 0.6H4.2L5.2 1.8H10.7V8.7H0.3Z" fill="#a9a9a9"/><path d="M0.3 3.2H10.7" stroke="#c6c6c6" stroke-width="0.6"/></svg>
<svg style="left:659.6px;top:139px;" width="10.8" height="10" viewBox="0 0 11 10"><path d="M0.6 0.6H7.4V9.4H0.6Z" fill="#fff" stroke="#666" stroke-width="1"/><path d="M9.4 1.6L10.8 3L5.4 8.6L3.4 9.4L4.2 7.2Z" fill="#2c6ea8" stroke="#fff" stroke-width="0.4"/></svg>
<svg style="left:674.8px;top:139px;" width="10" height="10" viewBox="0 0 10 10"><path d="M0.5 0.5H6V7.5H0.5Z" fill="#fff" stroke="#aaa" stroke-width="0.9"/><path d="M3.6 2.4H9.4V9.6H3.6Z" fill="#fff" stroke="#aaa" stroke-width="0.9"/></svg>
<svg style="left:690px;top:139.6px;" width="9.8" height="8.8" viewBox="0 0 10 9"><path d="M0.5 0.5L9.5 8.5M9.5 0.5L0.5 8.5" stroke="#a6a6a6" stroke-width="1.1"/></svg>
<div style="left:705.2px;top:138px;width:0.8px;height:12px;background:#dcdcdc;"></div>
<svg style="left:711.4px;top:139px;" width="9.6" height="10" viewBox="0 0 10 10"><path d="M0.6 0.6H7.4V9.4H0.6Z" fill="#fff" stroke="#666" stroke-width="1"/><circle cx="7" cy="7.2" r="3.1" fill="#f1f1f1"/><circle cx="7" cy="7.2" r="2.1" fill="none" stroke="#2a2a2a" stroke-width="1.3" stroke-dasharray="1 0.65"/><circle cx="7" cy="7.2" r="1.5" fill="none" stroke="#2a2a2a" stroke-width="1"/></svg>
<div style="left:726.2px;top:138px;width:0.8px;height:12px;background:#dcdcdc;"></div>
<svg style="left:732.8px;top:140px;" width="7" height="8" viewBox="0 0 7 8"><path d="M3.5 0.2L7 4H5V8H2V4H0Z" fill="#8fb8e4"/></svg>
<div style="left:574px;top:153px;width:173px;height:166.6px;background:#fff;border:1px solid #bdbdbd;"></div>
<div style="left:579.6px;top:159.4px;width:6.2px;height:6.2px;background:#fff;border:1px solid #9a9a9a;"></div>
<div style="left:581.2px;top:162.1px;width:3px;height:0.8px;background:#555;"></div>
<div style="left:585.8px;top:162.1px;width:4.4px;height:0.8px;background:#c4c4c4;"></div>
<svg style="left:590px;top:156.5px;" width="11" height="11" viewBox="0 0 11 11"><path d="M5.5 0.4L11 5.6H9.4V10.8H6.6V7.4H4.4V10.8H1.6V5.6H0Z" fill="#555"/><rect x="8.2" y="0.8" width="1.5" height="3" fill="#555"/></svg>
<span class="t" style="left:605px;top:157.14px;font-size:11.5px;color:#444;letter-spacing:0.251px;">Untitled1</span>
<svg style="left:595px;top:168px;" width="10" height="13" viewBox="0 0 10 13"><path d="M0.6 0.6V11.4H8" fill="none" stroke="#bbb" stroke-width="0.8"/></svg>
<svg style="left:604px;top:174px;" width="8.6" height="9.6" viewBox="0 0 9 10"><path d="M0.6 0.6H5.6L8.2 3.2V9.4H0.6Z" fill="#fff" stroke="#888" stroke-width="0.9"/><path d="M5.4 0.8V3.4H8" fill="none" stroke="#888" stroke-width="0.7"/></svg>
<div style="left:616px;top:171px;width:32px;height:15px;background:#ececec;"></div>
<span class="t" style="left:618px;top:173.94px;font-size:11.5px;color:#333;letter-spacing:0.225px;">index</span>
<div style="left:573px;top:319.6px;width:177px;height:4.6px;background:#cbcbcb;"></div>
<span class="t" style="left:577.6px;top:330.13px;font-size:13.8px;color:#4a4a4a;letter-spacing:0.057px;">Properties</span>
<svg style="left:711.0px;top:335.4px;" width="6.4" height="3.2" viewBox="0 0 6.4 3.2"><path d="M0 0H6.4L3.2 3.2Z" fill="#444"/></svg>
<svg style="left:725px;top:333.4px;" width="5" height="6.6" viewBox="0 0 5 7"><path d="M1 0.4H4V3.6H1ZM0 3.8H5M2.5 3.8V7M3.4 0.4V3.6" fill="none" stroke="#777" stroke-width="0.75"/></svg>
<svg style="left:737.6px;top:334.6px;" width="5.4" height="5" viewBox="0 0 6 6"><path d="M0.3 0.3L5.7 5.7M5.7 0.3L0.3 5.7" stroke="#444" stroke-width="1"/></svg>
<div style="left:574px;top:349.8px;width:173px;height:12.4px;background:#fff;"></div>
<span class="t" style="left:577px;top:352.48px;font-size:8px;color:#222;font-family:'Liberation Serif',serif;letter-spacing:0.000px;">Image1</span>
<svg style="left:738.9px;top:355.05px;" width="3.4" height="1.9" viewBox="0 0 3.4 1.9"><path d="M0 0H3.4L1.7 1.9Z" fill="#555"/></svg>
<div style="left:574px;top:362.2px;width:173px;height:20.6px;background:#f1f1f1;"></div>
<div style="left:578.8px;top:365.8px;width:13.2px;height:12.6px;background:#dadada;"></div>
<svg style="left:580.4px;top:367px;" width="10.6" height="10.6" viewBox="0 0 11 11"><g fill="#fff" stroke="#555" stroke-width="0.7"><rect x="0.4" y="0.6" width="3.6" height="3.6"/><rect x="0.4" y="6.6" width="3.6" height="3.6"/></g><path d="M1.2 2.4H3.2M2.2 1.4V3.4M1.2 8.4H3.2M2.2 7.4V9.4" stroke="#333" stroke-width="0.6"/><path d="M5 2.4H8.4M5 8.4H8.4" stroke="#777" stroke-width="0.9"/></svg>
<svg style="left:596px;top:366.6px;" width="10.6" height="11" viewBox="0 0 11 11"><text x="0" y="5" font-size="6.4" font-weight="700" font-family="Liberation Sans,sans-serif" fill="#2b64b0">A</text><text x="0.2" y="10.9" font-size="6.4" font-weight="700" font-family="Liberation Sans,sans-serif" fill="#c85a28">Z</text><path d="M8 0.4V9.4M6 7.4L8 10.4L10 7.4Z" stroke="#333" stroke-width="0.9" fill="#333"/></svg>
<svg style="left:612.4px;top:367px;" width="7.6" height="11" viewBox="0 0 8 11"><path d="M0.3 0.4V3.4C0.3 4.8 1.2 5.6 2.4 6V9.8C2.4 10.6 3.2 11 4 11C4.8 11 5.6 10.6 5.6 9.8V6C6.8 5.6 7.7 4.8 7.7 3.4V0.4H5.8V3.2H2.2V0.4Z" fill="#2d6fa8"/></svg>
<svg style="left:627px;top:366.6px;" width="10" height="11" viewBox="0 0 10 11"><path d="M4.6 0H10L6.2 4.4H9L1 11L3.4 5.8H0.6Z" fill="#2f68b0"/></svg>
<div style="left:645px;top:364.8px;width:99.4px;height:15.4px;background:#fff;border:1px solid #dcdcdc;"></div>
<span class="t" style="left:649px;top:368.44px;font-size:9px;color:#7a7a7a;letter-spacing:-0.386px;">Search</span>
<svg style="left:732px;top:367px;" width="10" height="9.6" viewBox="0 0 10 10"><circle cx="6.2" cy="4.1" r="3.1" fill="#e3f2fa" stroke="#4a7a98" stroke-width="1.3"/><path d="M3.9 6.4L0.7 9.5" stroke="#4a7a98" stroke-width="1.5" stroke-linecap="round"/></svg>
<div style="left:574px;top:382.8px;width:173px;height:103.6px;background:#eeeeee;"></div>
<div style="left:587px;top:397.6px;width:149px;height:73px;background:#fff;"></div>
<div style="left:586px;top:397.6px;width:150px;height:0.8px;background:#f0f0f0;"></div>
<div style="left:586px;top:412px;width:150px;height:0.8px;background:#f0f0f0;"></div>
<div style="left:586px;top:426.6px;width:150px;height:0.8px;background:#f0f0f0;"></div>
<div style="left:586px;top:441.2px;width:150px;height:0.8px;background:#f0f0f0;"></div>
<div style="left:586px;top:455.8px;width:150px;height:0.8px;background:#f0f0f0;"></div>
<div style="left:586px;top:470.4px;width:150px;height:0.8px;background:#f0f0f0;"></div>
<div style="left:661px;top:397.6px;width:0.8px;height:73px;background:#f2f2f2;"></div>
<svg style="left:580.6px;top:389px;" width="3" height="3" viewBox="0 0 4 4"><path d="M3.8 0.2V3.8H0.2Z" fill="#aaa"/></svg>
<span class="t" style="left:591.6px;top:386.42px;font-size:8.6px;color:#333;font-weight:700;letter-spacing:0.064px;">General</span>
<span class="t" style="left:592px;top:401.42px;font-size:8.6px;letter-spacing:-0.243px;">(ID)</span>
<svg style="left:650.4px;top:401.4px;" width="7" height="7" viewBox="0 0 7 7"><rect x="0.9" y="0.9" width="5.2" height="5.2" fill="#fff" stroke="#777" stroke-width="0.9"/><rect x="4.4" y="4.4" width="2.2" height="2.2" fill="#666"/></svg>
<span class="t" style="left:665px;top:401.42px;font-size:8.6px;letter-spacing:0.146px;">Image1</span>
<span class="t" style="left:592px;top:416.02px;font-size:8.6px;color:#b4b4b4;letter-spacing:0.039px;">(Object Ty...</span>
<svg style="left:650.4px;top:416.0px;" width="7" height="7" viewBox="0 0 7 7"><rect x="0.9" y="0.9" width="5.2" height="5.2" fill="#fff" stroke="#777" stroke-width="0.9"/><rect x="4.4" y="4.4" width="2.2" height="2.2" fill="#666"/></svg>
<span class="t" style="left:665px;top:416.02px;font-size:8.6px;color:#b4b4b4;letter-spacing:0.427px;">Image</span>
<span class="t" style="left:592px;top:430.62px;font-size:8.6px;letter-spacing:0.077px;">Opacity</span>
<svg style="left:650.4px;top:430.59999999999997px;" width="7" height="7" viewBox="0 0 7 7"><rect x="0.9" y="0.9" width="5.2" height="5.2" fill="#fff" stroke="#777" stroke-width="0.9"/><rect x="4.4" y="4.4" width="2.2" height="2.2" fill="#666"/></svg>
<span class="t" style="left:665px;top:430.62px;font-size:8.6px;letter-spacing:-0.172px;">100</span>
<span class="t" style="left:592px;top:445.22px;font-size:8.6px;letter-spacing:0.060px;">Position</span>
<svg style="left:650.4px;top:445.2px;" width="7" height="7" viewBox="0 0 7 7"><rect x="0.9" y="0.9" width="5.2" height="5.2" fill="#fff" stroke="#777" stroke-width="0.9"/><rect x="4.4" y="4.4" width="2.2" height="2.2" fill="#666"/></svg>
<span class="t" style="left:665px;top:445.22px;font-size:8.6px;letter-spacing:-0.048px;">102, 46</span>
<span class="t" style="left:592px;top:459.62px;font-size:8.6px;letter-spacing:-0.573px;">Size</span>
<svg style="left:650.4px;top:459.59999999999997px;" width="7" height="7" viewBox="0 0 7 7"><rect x="0.9" y="0.9" width="5.2" height="5.2" fill="#fff" stroke="#777" stroke-width="0.9"/><rect x="4.4" y="4.4" width="2.2" height="2.2" fill="#666"/></svg>
<span class="t" style="left:665px;top:459.62px;font-size:8.6px;letter-spacing:-0.036px;">322, 225</span>
<svg style="left:579.4px;top:446.4px;" width="4" height="5" viewBox="0 0 4 5"><path d="M0.4 0.4L3.6 2.5L0.4 4.6Z" fill="#fff" stroke="#aaa" stroke-width="0.7"/></svg>
<svg style="left:579.4px;top:461px;" width="4" height="5" viewBox="0 0 4 5"><path d="M0.4 0.4L3.6 2.5L0.4 4.6Z" fill="#fff" stroke="#aaa" stroke-width="0.7"/></svg>
<svg style="left:580.6px;top:476.6px;" width="3" height="3" viewBox="0 0 4 4"><path d="M3.8 0.2V3.8H0.2Z" fill="#aaa"/></svg>
<span class="t" style="left:591.6px;top:474.22px;font-size:8.6px;color:#333;font-weight:700;letter-spacing:0.096px;">Behaviour</span>
<div style="left:736px;top:383.4px;width:11.4px;height:103px;background:#dadada;"></div>
<div style="left:736.4px;top:383.8px;width:10.6px;height:11.4px;background:#fff;border:1px solid #c4c4c4;"></div>
<svg style="left:739.3px;top:388.3px;" width="5" height="2.6" viewBox="0 0 5 2.6"><path d="M0 2.6H5L2.5 0Z" fill="#444"/></svg>
<div style="left:736.4px;top:395.6px;width:10.6px;height:14.4px;background:#fff;border:1px solid #d0d0d0;border-top:none;"></div>
<div style="left:736.4px;top:472px;width:10.6px;height:11.8px;background:#fff;border:1px solid #c4c4c4;"></div>
<svg style="left:739.3px;top:476.7px;" width="5" height="2.6" viewBox="0 0 5 2.6"><path d="M0 0H5L2.5 2.6Z" fill="#444"/></svg>
<div style="left:574px;top:486.6px;width:173px;height:47.4px;background:#efefef;border:1px solid #c2c2c2;"></div>
<div style="left:0px;top:533.4px;width:750px;height:16.4px;background:#f0f0f0;"></div>
<span class="t" style="left:4px;top:539.54px;color:#2b579a;letter-spacing:-0.118px;text-decoration:underline;">WYSIWYG Web Builder Forum</span>
<span class="t" style="left:128px;top:539.54px;letter-spacing:-0.143px;">id:Image1</span>
<span class="t" style="left:227px;top:539.54px;letter-spacing:-0.261px;">x:102, y:46</span>
<span class="t" style="left:292.4px;top:539.54px;letter-spacing:-0.221px;">w:322 h:225</span>
<div style="left:614.4px;top:543px;width:4.4px;height:0.9px;background:#a0a0a0;"></div>
<div style="left:625px;top:543px;width:61px;height:0.9px;background:#c4c4c4;"></div>
<div style="left:654.6px;top:537.2px;width:3.6px;height:10px;background:#f6f6f6;border:1px solid #9a9a9a;"></div>
<div style="left:695px;top:543px;width:5.2px;height:0.9px;background:#a0a0a0;"></div>
<div style="left:697.2px;top:540.8px;width:0.9px;height:5.2px;background:#a0a0a0;"></div>
<span class="t" style="left:709.7px;top:539.44px;letter-spacing:-0.468px;">100%</span>
<svg style="left:741px;top:541px;" width="7" height="7" viewBox="0 0 7 7"><g fill="#c4c4c4"><rect x="5" y="0" width="1.2" height="1.2"/><rect x="5" y="2.5" width="1.2" height="1.2"/><rect x="2.5" y="2.5" width="1.2" height="1.2"/><rect x="5" y="5" width="1.2" height="1.2"/><rect x="2.5" y="5" width="1.2" height="1.2"/><rect x="0" y="5" width="1.2" height="1.2"/></g></svg>
<div style="left:0px;top:41.6px;width:0.8px;height:510px;background:#5a80ae;"></div>
<div style="left:0.8px;top:41.6px;width:0.8px;height:508px;background:#b4cbe4;"></div>
<div style="left:749.2px;top:41.6px;width:0.8px;height:510px;background:#5a80ae;"></div>
<div style="left:748.4px;top:41.6px;width:0.8px;height:508px;background:#b4cbe4;"></div>
<div style="left:0px;top:549.6px;width:750px;height:1.4px;background:#5a86bb;"></div>
</div></body></html>
